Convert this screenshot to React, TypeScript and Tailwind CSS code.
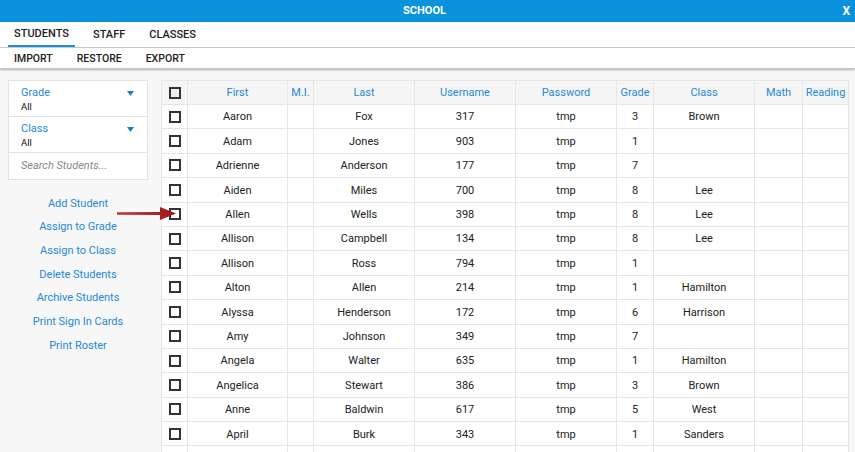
import React from "react";

const rows: [string, string, string, string, string][] = [
  ["Aaron", "Fox", "317", "3", "Brown"],
  ["Adam", "Jones", "903", "1", ""],
  ["Adrienne", "Anderson", "177", "7", ""],
  ["Aiden", "Miles", "700", "8", "Lee"],
  ["Allen", "Wells", "398", "8", "Lee"],
  ["Allison", "Campbell", "134", "8", "Lee"],
  ["Allison", "Ross", "794", "1", ""],
  ["Alton", "Allen", "214", "1", "Hamilton"],
  ["Alyssa", "Henderson", "172", "6", "Harrison"],
  ["Amy", "Johnson", "349", "7", ""],
  ["Angela", "Walter", "635", "1", "Hamilton"],
  ["Angelica", "Stewart", "386", "3", "Brown"],
  ["Anne", "Baldwin", "617", "5", "West"],
  ["April", "Burk", "343", "1", "Sanders"],
  ["", "", "", "", ""],
];

const cols = "grid grid-cols-[26px_100px_26px_101px_101px_101px_37px_101px_48px_46px]";

function Box({ header }: { header?: boolean }) {
  return (
    <span
      className={`block w-[12px] h-[12px] border-2 border-[#333] ${header ? "bg-[#eee]" : "bg-white"}`}
    />
  );
}

function Cell({ children, className = "" }: { children?: React.ReactNode; className?: string }) {
  return (
    <div className={`flex items-center justify-center border-r border-b border-[#e6e6e6] whitespace-nowrap overflow-hidden ${className}`}>
      {children}
    </div>
  );
}

export default function App() {
  const headers = ["First", "M.I.", "Last", "Username", "Password", "Grade", "Class", "Math", "Reading"];
  const links = [
    "Add Student",
    "Assign to Grade",
    "Assign to Class",
    "Delete Students",
    "Archive Students",
    "Print Sign In Cards",
    "Print Roster",
  ];
  return (
    <div
      className="w-[855px] h-[452px] overflow-hidden bg-[#f7f7f7] relative"
      style={{ fontFamily: "Roboto, 'Noto Sans', sans-serif" }}
    >
      {/* Title bar */}
      <div className="h-[22px] bg-[#0a93dc] flex items-center text-white text-[11px] font-bold">
        <div className="w-[30px]" />
        <div className="flex-1 text-center pr-[6px]">SCHOOL</div>
        <div className="w-[30px] text-right pr-[5px] text-[12px]">X</div>
      </div>
      {/* Tabs */}
      <div className="h-[26px] bg-white border-b border-[#cfcfcf] flex items-stretch pl-[8px] text-[11px] font-medium text-[#222]">
        <div className="w-[67px] flex items-center justify-center border-b-2 border-[#1a8fe0] pt-[2px]">STUDENTS</div>
        <div className="ml-[18px] flex items-center pt-[2px]">STAFF</div>
        <div className="ml-[24px] flex items-center pt-[2px]">CLASSES</div>
      </div>
      {/* Sub actions */}
      <div className="h-[21px] bg-white flex items-center pl-[14px] pt-[2px] text-[10.5px] font-medium text-[#222] shadow-[0_1px_2px_rgba(0,0,0,0.3)] border-b border-[#c8c8c8]">
        <span>IMPORT</span>
        <span className="ml-[24px]">RESTORE</span>
        <span className="ml-[24px]">EXPORT</span>
      </div>
      {/* Body */}
      <div className="flex pt-[11px]">
        {/* Sidebar */}
        <div className="w-[161px] shrink-0 pl-[8px] pr-[13px]">
          <div className="bg-white border border-[#e3e3e3] w-[140px]">
            <div className="h-[36px] border-b border-[#e3e3e3] pl-[12px] pr-[13px] pt-[5px]">
              <div className="flex justify-between items-center text-[11px] leading-[14px] text-[#2589d8]">
                <span>Grade</span>
                <svg width="7" height="5" viewBox="0 0 7 5"><path d="M0 0H7L3.5 5Z" fill="#1b7cc4" /></svg>
              </div>
              <div className="text-[9.5px] leading-[12px] text-[#111] mt-[1px]">All</div>
            </div>
            <div className="h-[36px] border-b border-[#e3e3e3] pl-[12px] pr-[13px] pt-[5px]">
              <div className="flex justify-between items-center text-[11px] leading-[14px] text-[#2589d8]">
                <span>Class</span>
                <svg width="7" height="5" viewBox="0 0 7 5"><path d="M0 0H7L3.5 5Z" fill="#1b7cc4" /></svg>
              </div>
              <div className="text-[9.5px] leading-[12px] text-[#111] mt-[1px]">All</div>
            </div>
            <div className="h-[26px] pl-[12px] flex items-center text-[11px] italic text-[#888]">Search Students...</div>
          </div>
          <div className="mt-[12px] w-[140px] flex flex-col items-center text-[11px] text-[#2589d8]">
            {links.map((l) => (
              <div key={l} className="h-[23.7px] flex items-center">{l}</div>
            ))}
          </div>
        </div>
        {/* Table */}
        <div className="bg-white border-l border-t border-[#e6e6e6] text-[11px] text-[#222]">
          <div className={`${cols} bg-[#f5f5f5] h-[24px]`}>
            <Cell><Box header /></Cell>
            {headers.map((h) => (
              <Cell key={h} className="text-[#2589d8] pt-[1px]">{h}</Cell>
            ))}
          </div>
          {rows.map((r, i) => (
            <div key={i} className={`${cols} h-[24.4px]`}>
              <Cell>{i < 14 && <Box />}</Cell>
              <Cell className="pt-[2px]">{r[0]}</Cell>
              <Cell />
              <Cell className="pt-[2px]">{r[1]}</Cell>
              <Cell className="pt-[2px]">{r[2]}</Cell>
              <Cell className="pt-[2px]">{i < 14 ? "tmp" : ""}</Cell>
              <Cell className="pt-[2px]">{r[3]}</Cell>
              <Cell className="pt-[2px]">{r[4]}</Cell>
              <Cell />
              <Cell />
            </div>
          ))}
        </div>
      </div>
      {/* Annotation arrow */}
      <svg className="absolute left-[116px] top-[206px]" width="62" height="15" viewBox="0 0 62 15">
        <defs>
          <linearGradient id="ag" x1="0" x2="1" y1="0" y2="0">
            <stop offset="0" stopColor="#c23b3b" />
            <stop offset="1" stopColor="#9e1414" />
          </linearGradient>
        </defs>
        <path d="M1 6.2 L44 6 L44 1 L60 7.5 L44 14 L44 9 L1 8.8 Z" fill="url(#ag)" />
      </svg>
    </div>
  );
}
